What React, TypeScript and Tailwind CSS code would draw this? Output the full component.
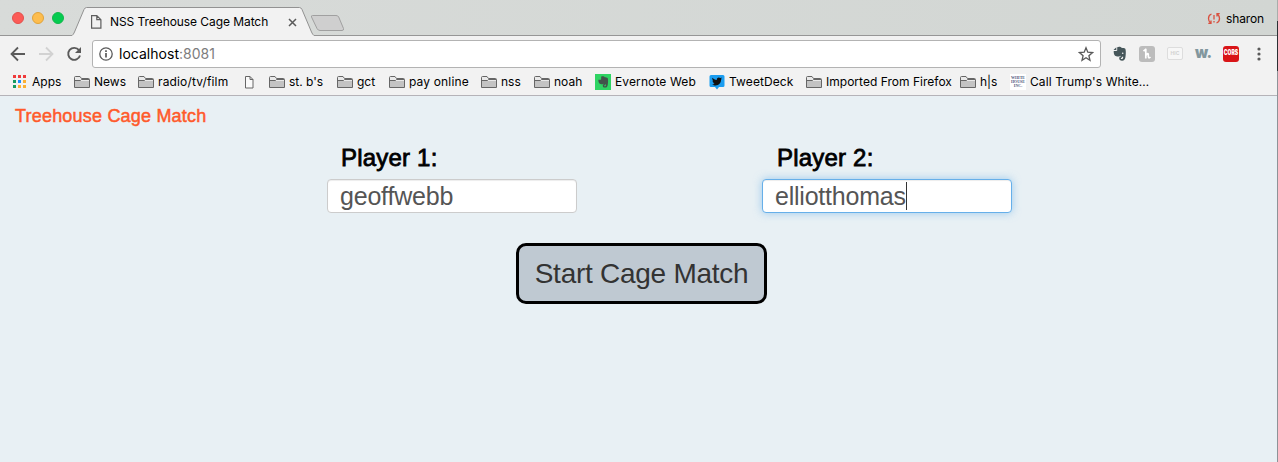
import React from "react";

type Kind = "apps" | "folder" | "file" | "evernote" | "tweetdeck" | "whitehouse";

const bookmarks: { kind: Kind; label: string; width: string }[] = [
  { kind: "apps", label: "Apps", width: "w-[62px]" },
  { kind: "folder", label: "News", width: "w-[64px] tracking-[0.02px]" },
  { kind: "folder", label: "radio/tv/film", width: "w-[107px] tracking-[0.15px]" },
  { kind: "file", label: "", width: "w-[24px]" },
  { kind: "folder", label: "st. b's", width: "w-[68px]" },
  { kind: "folder", label: "gct", width: "w-[52px]" },
  { kind: "folder", label: "pay online", width: "w-[92px] tracking-[0.15px]" },
  { kind: "folder", label: "nss", width: "w-[53px]" },
  { kind: "folder", label: "noah", width: "w-[61px]" },
  { kind: "evernote", label: "Evernote Web", width: "w-[114px] tracking-[0.12px]" },
  { kind: "tweetdeck", label: "TweetDeck", width: "w-[97px] tracking-[0.1px]" },
  { kind: "folder", label: "Imported From Firefox", width: "w-[154px] tracking-[0.02px]" },
  { kind: "folder", label: "h|s", width: "w-[50px]" },
  { kind: "whitehouse", label: "Call Trump's White…", width: "w-[150px] tracking-[0.1px]" },
];

const elephant =
  "M5.2 1.2C6.6.2 9 .6 9.6 1.7c1.400.2 2.900.2 3.700 1 .8 1.500.6 6.200.1 8.800-.4 2-1.300 3.200-3.300 3.200-1.900 0-2.900-.9-2.900-2.400 0-1.400 1-2.200 2.700-2.100v1.500c-.8 0-1.100.3-1.100.7 0 .6.5.8 1.200.7.9-.1 1.200-.8 1.200-2.300-1.300.2-2.300-.1-2.700-1-.7 1-2.700.9-4.200.5C2.300 9.800 1.600 7.700 1.700 5h2.700c.7 0 .8-.3.8-.9z";

function BookmarkIcon({ kind }: { kind: Kind }) {
  if (kind === "apps") {
    const colors = ["#ef3b3b", "#ef3b3b", "#ef3b3b", "#169b62", "#1a8cff", "#fbb034", "#169b62", "#fbb034", "#fbb034"];
    return (
      <svg width="16" height="16" viewBox="0 0 16 16" className="shrink-0">
        {colors.map((c, i) => (
          <rect key={i} x={1 + (i % 3) * 5} y={1 + Math.floor(i / 3) * 5} width="3" height="3" fill={c} />
        ))}
      </svg>
    );
  }
  if (kind === "file")
    return (
      <svg width="10" height="14" viewBox="0 0 10 14" className="shrink-0" fill="#fafafa" stroke="#666" strokeWidth="1">
        <path d="M.5 1.500h4.500l3 3v8.500h-7.500zM5 1.500v3h3" />
      </svg>
    );
  if (kind === "folder")
    return (
      <svg width="16" height="16" viewBox="0 0 16 16" className="shrink-0">
        <path d="M.5 13.500v-10q0-1 1-1h4.500l1.500 2h7q1 0 1 1v8z" fill="#e9e9e9" stroke="#666" />
        <path d="M1 7h14v6H1z" fill="#c3c3c3" />
        <path d="M1 6.500h5.500l1-1h7.500" fill="none" stroke="#666" />
      </svg>
    );
  if (kind === "evernote")
    return (
      <svg width="16" height="16" viewBox="0 0 16 16" className="shrink-0">
        <path d="M0 0h16v16H0z" fill="#2fd463" />
        <path d={elephant} fill="#42534b" transform="translate(2 1.800) scale(.8)" />
      </svg>
    );
  if (kind === "tweetdeck")
    return (
      <svg width="16" height="16" viewBox="0 0 16 16" className="shrink-0">
        <path d="M2 1h12q1.500 0 1.500 1.500v9q0 1.500-1.500 1.500h-4l-2 2.500L6 13H2Q.5 13 .5 11.500v-9Q.5 1 2 1z" fill="#1b9df0" />
        <path d="M3.300 3.800c1.200 1.300 2.600 2 4.500 2.100-.4-2 2-3.200 3.500-1.800l1.500-.6-.8 1.300.9-.1-.9 1.100c.1 3.500-2.700 6.100-6.300 5.600-1.200-.1-2-.5-2.600-.9 1.100 0 2-.2 2.700-.8-.9-.1-1.500-.6-1.700-1.300h.8c-.9-.4-1.400-1-1.400-2l.8.2c-.8-.8-1.300-1.700-1-2.800z" fill="#111" />
      </svg>
    );
  return (
    <span className="flex h-4 w-4 shrink-0 flex-col items-center justify-center bg-white font-['Liberation_Serif',serif] text-[4px] leading-[4px] font-bold tracking-normal text-[#50587c]">
      <span>WHITE</span>
      <span>HOUSE</span>
      <span>INC.</span>
    </span>
  );
}

function TabStrip() {
  return (
    <div className="flex h-9 items-start border-b border-[#969696] bg-gradient-to-r from-[#d8dbd9] to-[#d2d6d3]">
      <div className="flex w-[72px] shrink-0 gap-2 pt-3 pl-3">
        <span className="h-3 w-3 rounded-full border border-[#e2514d] bg-[#fc5b57]" />
        <span className="h-3 w-3 rounded-full border border-[#e0a33a] bg-[#fdbd4e]" />
        <span className="h-3 w-3 rounded-full border border-[#12b84b] bg-[#05cb50]" />
      </div>
      <div className="relative h-9 w-[243px] shrink-0">
        <svg width="243" height="36" viewBox="0 0 243 36" className="absolute inset-0">
          <path d="M0 35.500 Q1.500 34.500 2.500 32L12 9.500Q13 7.500 14.500 7.500H227.500Q229 7.500 230 9.500L239.500 32Q240.500 34.500 242 35.500V36H0z" fill="#f2f2f2" />
          <path d="M0 35.500Q1.500 34.500 2.500 32L12 9.500Q13 7.500 14.500 7.500H227.500Q229 7.500 230 9.500L239.500 32Q240.500 34.500 242 35.500" fill="none" stroke="#929292" />
        </svg>
        <div className="relative flex h-full items-center pt-2 pl-[19px]">
          <svg width="11" height="14" viewBox="0 0 11 14" fill="none" stroke="#5e5e5e" strokeWidth="1.200" className="shrink-0">
            <path d="M.6.6h5.200l4.100 4.100v8.500H.6zM5.800.6v4.100h4.100" />
          </svg>
          <span className="ml-2 w-[169px] text-[12px] tracking-[-0.07px] whitespace-nowrap">NSS Treehouse Cage Match</span>
          <svg width="9" height="9" viewBox="0 0 9 9" stroke="#5a5a5a" strokeWidth="1.500" className="ml-[9px] shrink-0">
            <path d="M1 1l7 7M8 1L1 8" />
          </svg>
        </div>
      </div>
      <svg width="36" height="18" viewBox="0 0 36 18" className="mt-[14px] -ml-[6px] shrink-0">
        <path d="M3.500 1.500H27Q29 1.500 29.700 3L34.500 14.500Q35 16.500 33 16.500H11Q9 16.500 8 14.500L2.500 3Q2 1.500 3.500 1.500z" fill="#cfcfcf" stroke="#a0a0a0" />
      </svg>
      <div className="ml-auto flex h-9 items-center gap-[5px] pt-px pr-[14px] text-[12px]">
        <svg width="14" height="13" viewBox="0 0 14 13" fill="none" stroke="#d9503f" strokeWidth="1.300">
          <path d="M4.500 2Q1.500 3 1.500 6.500Q1.500 9 3.500 11M1.300 11.300H4V8.500M9.500 11Q12.500 10 12.500 6.500Q12.500 4 10.500 2M12.700 1.700H10V4.500M7 3v4.500M7 9v1.500" />
        </svg>
        <span className="w-[38px] whitespace-nowrap tracking-[-0.15px]">sharon</span>
      </div>
    </div>
  );
}

function Toolbar() {
  return (
    <div className="flex h-[35px] items-center bg-[#f2f2f2] pl-[10px]">
      <svg width="16" height="16" viewBox="0 0 16 16" fill="none" stroke="#5a5a5a" strokeWidth="1.800" className="shrink-0">
        <path d="M15 8H2M8 1.500L1.500 8L8 14.500" />
      </svg>
      <svg width="16" height="16" viewBox="0 0 16 16" fill="none" stroke="#d2d2d2" strokeWidth="1.800" className="ml-3 shrink-0">
        <path d="M1 8h13M8 1.500L14.500 8L8 14.500" />
      </svg>
      <svg width="16" height="16" viewBox="0 0 16 16" fill="none" stroke="#5a5a5a" strokeWidth="1.900" className="ml-3 shrink-0">
        <path d="M13 4.200A6 6 0 1 0 14 9.500" />
        <path d="M15 1v6H9z" fill="#5a5a5a" stroke="none" />
      </svg>
      <div className="ml-[10px] flex h-7 w-[1009px] shrink-0 items-center rounded-[3px] border border-[#b3b3b3] bg-white pl-[6px]">
        <svg width="14" height="14" viewBox="0 0 14 14" fill="none" stroke="#5a5a5a" strokeWidth="1.300" className="shrink-0">
          <circle cx="7" cy="7" r="6.200" />
          <path d="M7 6v4.500M7 3.300v1.600" strokeWidth="1.700" />
        </svg>
        <span className="ml-[6px] text-[14px] tracking-[0.02px]">
          localhost<span className="text-[#7d7d7d]">:8081</span>
        </span>
        <svg width="16" height="16" viewBox="0 0 16 16" fill="none" stroke="#5a5a5a" strokeWidth="1.300" className="mr-[6px] ml-auto shrink-0">
          <path d="M8 1.800l1.800 4.400 4.700.4-3.600 3.100 1.100 4.600L8 11.800l-4 2.500 1.100-4.600L1.500 6.600l4.700-.4z" />
        </svg>
      </div>
      <div className="ml-[11px] flex items-center gap-3">
        <svg width="16" height="16" viewBox="0 0 16 16">
          <path d={elephant} fill="#46565a" />
          <path d="M1.500 4L4.300 1.200V4z" fill="#46565a" />
          <circle cx="10.700" cy="7.200" r=".8" fill="#f2f2f2" />
        </svg>
        <svg width="16" height="16" viewBox="0 0 16 16" className="-ml-px">
          <rect width="16" height="16" rx="3" fill="#bcbcbc" />
          <path d="M4.500 5.200L7.300 3M6.800 2.800V12.500M6.800 9.500Q9.300 6 9.300 8.800Q9 13.500 11.500 11" fill="none" stroke="white" strokeWidth="1.700" />
        </svg>
        <span className="flex h-[13px] w-4 items-center justify-center rounded-[2px] border border-[#ddd] bg-[#f7f7f7] text-[5px] font-bold text-[#d2d2d2]">HIC</span>
        <span className="w-4 -translate-y-px text-[15px] leading-4 font-black tracking-[-0.5px] text-[#82979e]">w.</span>
        <span className="flex h-4 w-4 items-center justify-center rounded-[3px] bg-[#d91518]">
          <span className="scale-x-[0.72] text-[7px] font-black text-white">CORS</span>
        </span>
        <svg width="4" height="16" viewBox="0 0 4 16" fill="#5a5a5a" className="ml-[6px]">
          <circle cx="2" cy="3" r="1.600" />
          <circle cx="2" cy="8" r="1.600" />
          <circle cx="2" cy="13" r="1.600" />
        </svg>
      </div>
    </div>
  );
}

function Bookmarks() {
  return (
    <div className="flex h-[25px] items-center border-b border-[#b5b3b8] bg-[#f2f2f2] pb-[2px] pl-3">
      {bookmarks.map((b, i) => (
        <div key={i} className={"flex h-full shrink-0 items-center gap-1 whitespace-nowrap text-[12px] " + b.width}>
          <BookmarkIcon kind={b.kind} />
          {b.label && <span>{b.label}</span>}
        </div>
      ))}
    </div>
  );
}

export default function App() {
  return (
    <div className="relative flex h-[462px] w-[1278px] flex-col overflow-hidden bg-[#e8f0f4] font-['Inter','Liberation_Sans',sans-serif] text-black">
      <TabStrip />
      <Toolbar />
      <Bookmarks />
      <main className="flex flex-1 flex-col font-['Liberation_Sans',sans-serif]">
        <h1 className="h-[45px] pt-[6px] pl-[15px] text-[18px] leading-7 tracking-[0.2px] text-[#ff5a2b] [-webkit-text-stroke:0.5px_#ff5a2b]">
          Treehouse Cage Match
        </h1>
        <div className="flex gap-[185px] pl-[327px]">
          <label className="flex w-[250px] flex-col">
            <span className="h-[38px] pl-[14px] text-[24px] leading-[34px] tracking-[0.2px] [-webkit-text-stroke:0.8px_black]">Player 1:</span>
            <span className="flex h-[34px] items-center rounded-[4px] border border-[#ccc] bg-white pl-3 text-[25px] leading-8 tracking-[-0.2px] text-[#555] shadow-[inset_0_1px_1px_rgba(0,0,0,0.075)]">
              geoffwebb
            </span>
          </label>
          <label className="flex w-[250px] flex-col">
            <span className="h-[38px] pl-[15px] text-[24px] leading-[34px] tracking-[0.2px] [-webkit-text-stroke:0.8px_black]">Player 2:</span>
            <span className="flex h-[34px] items-center rounded-[4px] border border-[#66afe9] bg-white pl-3 text-[25px] leading-8 tracking-[-0.22px] text-[#555] shadow-[inset_0_1px_1px_rgba(0,0,0,0.075),0_0_8px_rgba(102,175,233,0.6)]">
              elliotthomas
              <span className="h-7 w-px bg-[#333]" />
            </span>
          </label>
        </div>
        <button className="mt-[30px] ml-[516px] h-[61px] w-[251px] rounded-[10px] border-3 border-black bg-[#bfc9d2] text-[28px] leading-8 tracking-[-0.27px] whitespace-nowrap text-[#333]">
          Start Cage Match
        </button>
      </main>
      <div className="absolute top-0 right-0 flex h-full w-px flex-col">
        <span className="h-[21px] bg-[#a9adab]" />
        <span className="h-[50px] bg-[#2c3035]" />
        <span className="flex-1 bg-[#8d9398]" />
      </div>
    </div>
  );
}
